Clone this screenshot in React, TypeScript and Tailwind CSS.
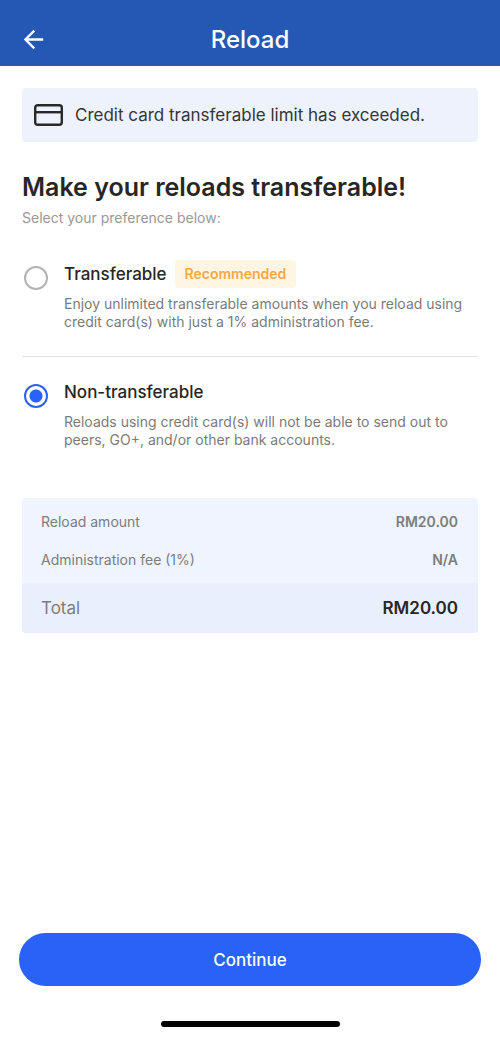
import React, { useState } from "react";

type Preference = {
  id: string;
  title: string;
  badge?: string;
  description: string;
};

const preferences: Preference[] = [
  {
    id: "transferable",
    title: "Transferable",
    badge: "Recommended",
    description:
      "Enjoy unlimited transferable amounts when you reload using credit card(s) with just a 1% administration fee.",
  },
  {
    id: "non-transferable",
    title: "Non-transferable",
    description:
      "Reloads using credit card(s) will not be able to send out to peers, GO+, and/or other bank accounts.",
  },
];

const Header = () => (
  <header className="grid h-[66px] grid-cols-[1fr_auto_1fr] items-center bg-[#2558b5] px-[22px] pt-[14px] text-white">
    <button type="button" aria-label="Back" className="w-6">
      <svg width="24" height="24" viewBox="0 0 24 24" fill="none" stroke="currentColor" strokeWidth="2.3">
        <path d="M21.2 11.5H3.5M12.3 2.6 3.4 11.5l8.9 8.9" />
      </svg>
    </button>
    <h1 className="text-2xl font-medium">Reload</h1>
  </header>
);

const LimitNotice = () => (
  <div className="flex h-[54px] items-center gap-3 rounded bg-[#edf2fd] px-3">
    <svg width="29" height="24" viewBox="0 0 29 24" fill="none" stroke="#292929" strokeWidth="2.4">
      <rect x="1.2" y="2.2" width="26.6" height="19.6" rx="2.5" />
      <path d="M1.5 9.2h26" />
    </svg>
    <p className="pt-px text-[17px] text-[#363636]">Credit card transferable limit has exceeded.</p>
  </div>
);

const App = () => {
  const [selected, setSelected] = useState("non-transferable");

  return (
    <div className="flex min-h-screen flex-col bg-white font-['Inter',sans-serif]">
      <Header />
      <main className="flex-1 px-[22px] pt-[22px]">
        <LimitNotice />
        <h2 className="mt-7 text-[25px] leading-[34px] font-semibold text-[#262626]">
          Make your reloads transferable!
        </h2>
        <p className="mt-1 text-sm text-[#999999]">Select your preference below:</p>

        <fieldset className="mt-8 divide-y divide-[#e2e2e2]">
          {preferences.map((item) => (
            <div key={item.id} className="flex gap-4 pb-[25px] not-first:pt-[21px]">
              <input
                type="radio"
                name="preference"
                id={item.id}
                checked={selected === item.id}
                onChange={() => setSelected(item.id)}
                className="mt-[6px] ml-[2px] size-6 shrink-0 appearance-none rounded-full border-2 border-[#b3b3b3] checked:border-[#2962f6] checked:bg-[radial-gradient(circle,#2962f6_6px,transparent_7px)]"
              />
              <label htmlFor={item.id} className="min-w-0 flex-1">
                <span className="flex h-7 items-center gap-2">
                  <span className="pt-px text-[17px] font-medium text-[#262626]">{item.title}</span>
                  {item.badge && (
                    <span className="rounded bg-[#fef6e2] px-[10px] text-sm leading-7 font-semibold text-[#f9a846]">
                      {item.badge}
                    </span>
                  )}
                </span>
                <span className="mt-[7px] block text-sm leading-[18px] text-[#7b7b7b]">{item.description}</span>
              </label>
            </div>
          ))}
        </fieldset>

        <table className="mt-6 w-full overflow-hidden rounded bg-[#eff4fe] text-sm text-[#7d7d7d]">
          <tbody>
            <tr className="h-[47px]">
              <th scope="row" className="pl-[19px] text-left font-normal">Reload amount</th>
              <td className="pr-5 text-right font-semibold">RM20.00</td>
            </tr>
            <tr className="h-[38px]">
              <th scope="row" className="pb-2 pl-[19px] text-left font-normal">Administration fee (1%)</th>
              <td className="pr-5 pb-2 text-right font-semibold">N/A</td>
            </tr>
            <tr className="h-[50px] bg-[#e8f0fd] text-[17px]">
              <th scope="row" className="pl-[19px] text-left font-normal">Total</th>
              <td className="pr-5 text-right font-semibold text-[#262626]">RM20.00</td>
            </tr>
          </tbody>
        </table>
      </main>
      <footer className="px-[19px] pb-[10px]">
        <button type="button" className="h-[53px] w-full rounded-full bg-[#2962f6] pt-[2px] text-[17px] font-medium text-white">
          Continue
        </button>
        <div className="mx-auto mt-[35px] h-[6px] w-[179px] rounded-full bg-black" />
      </footer>
    </div>
  );
};

export default App;
